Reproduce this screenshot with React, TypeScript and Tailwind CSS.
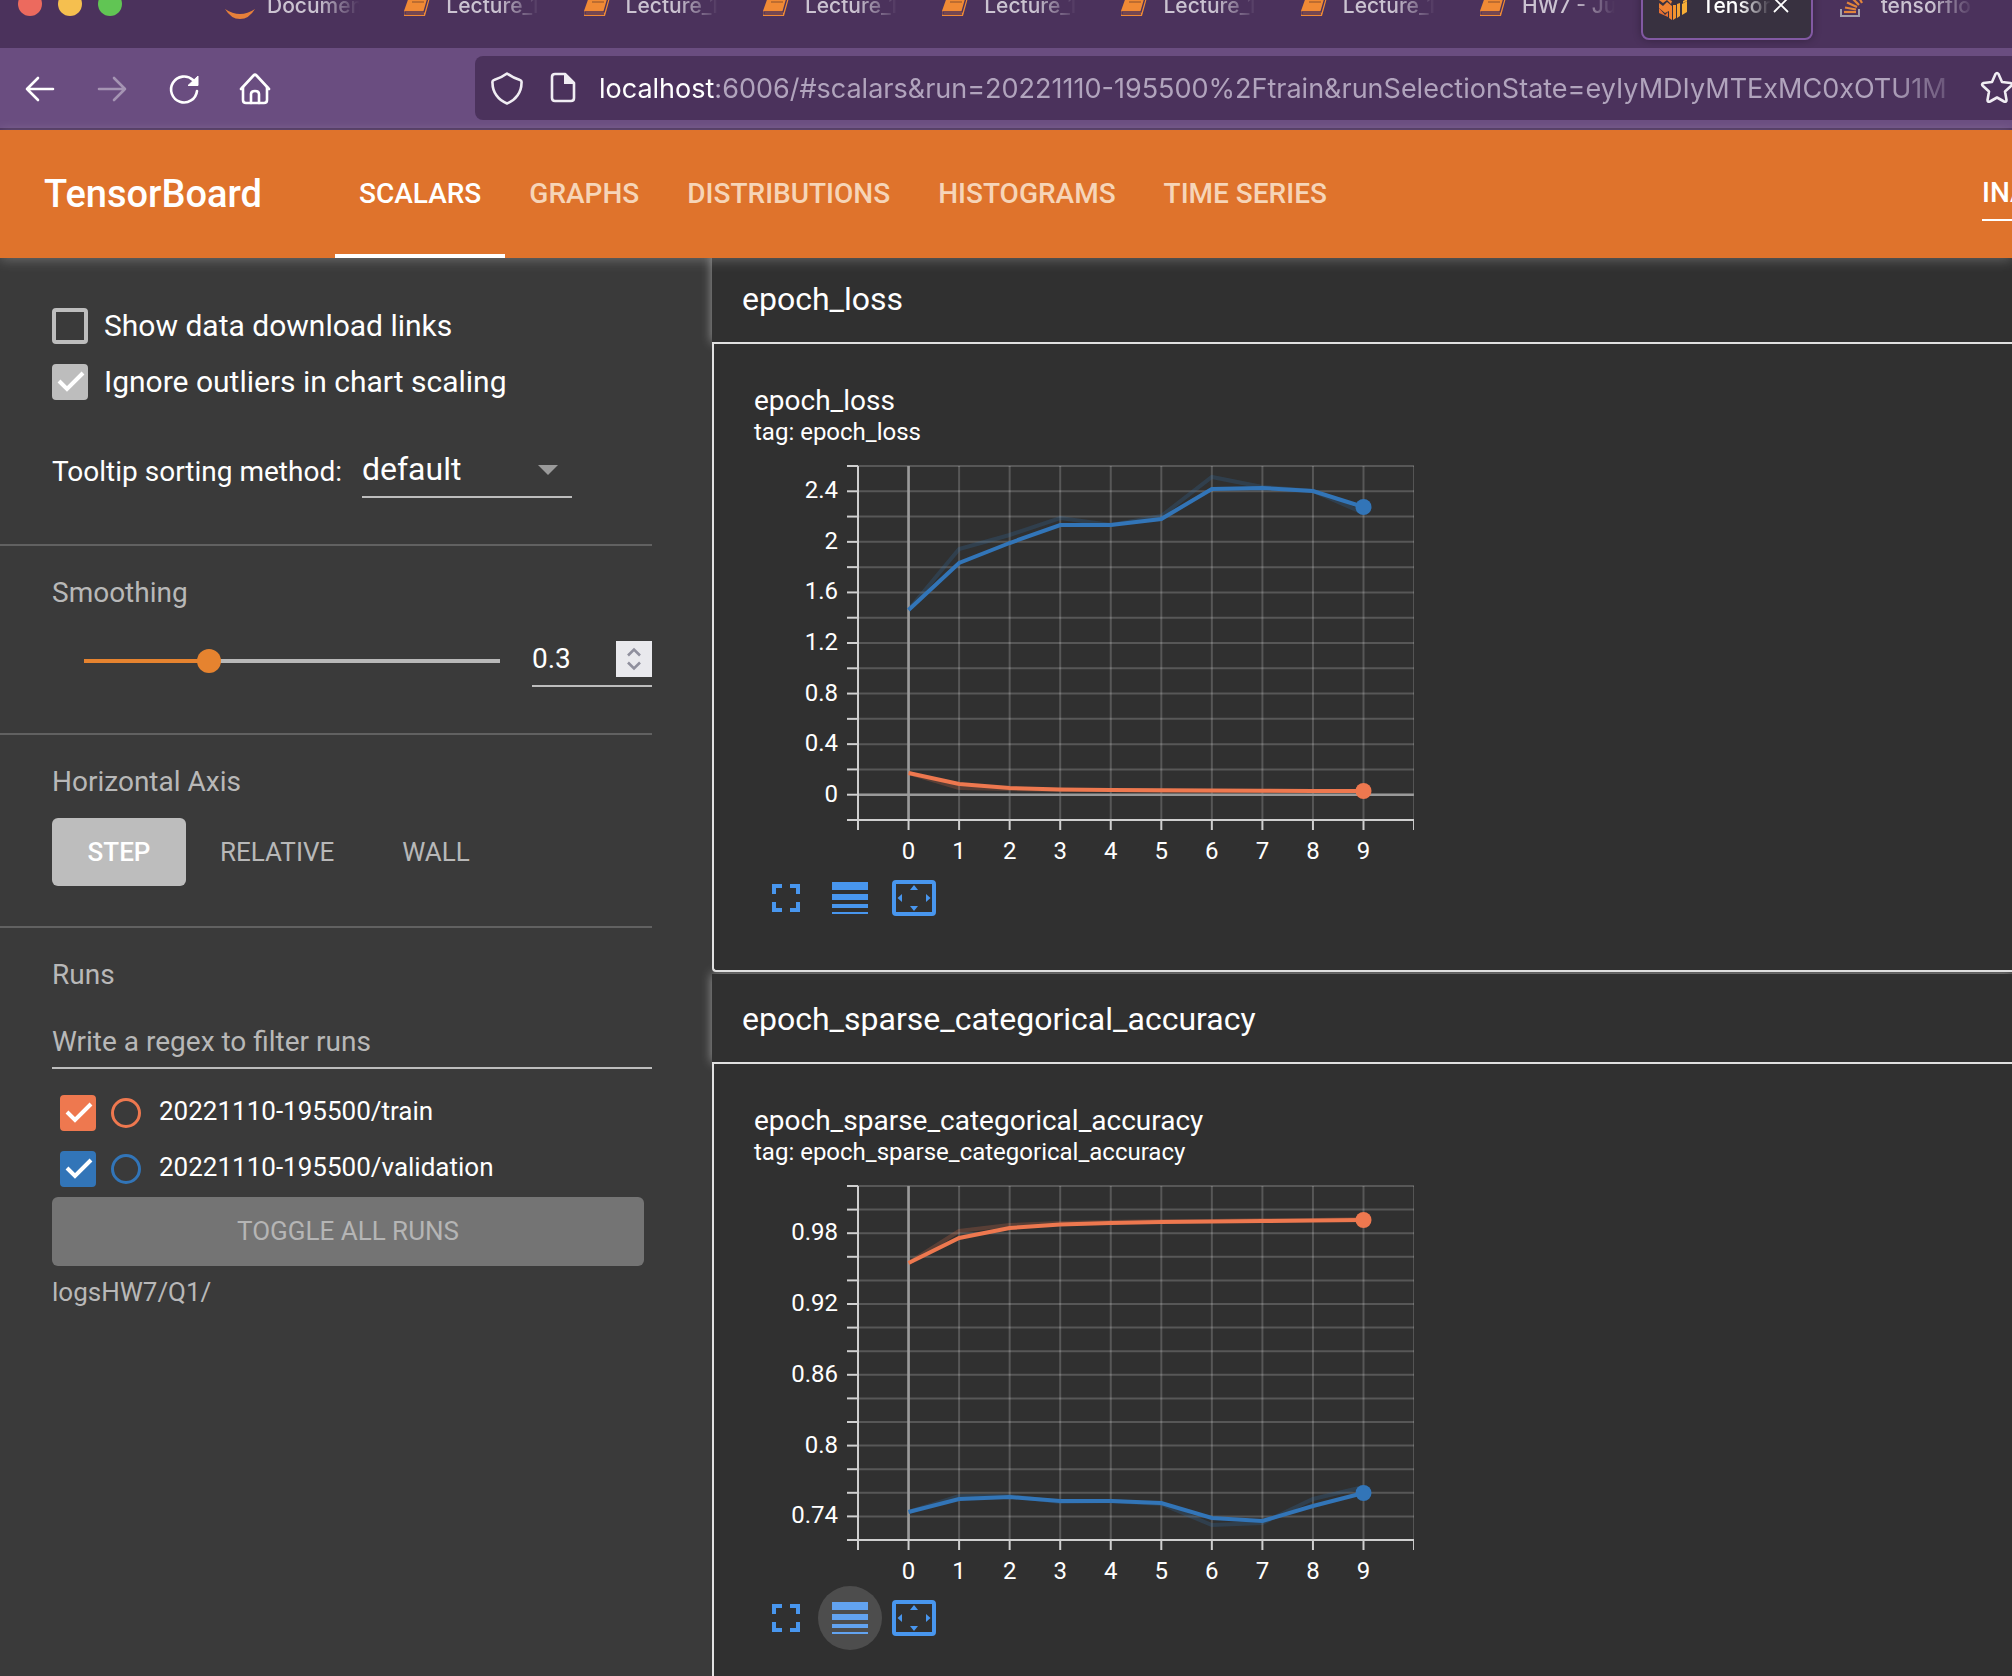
import React, { useState } from "react";

const ORANGE = "#ee784f";
const BLUE = "#3275b8";

/* ---------- browser chrome ---------- */

function JupyterIcon() {
  return (
    <svg viewBox="0 0 32 32" className="size-8 shrink-0" aria-hidden="true">
      <path d="M0 19 Q15 29 30 19 Q24 29 15 29 Q6 29 0 19Z" fill="#e6803a" />
    </svg>
  );
}

function BookIcon() {
  return (
    <svg viewBox="0 0 32 32" className="size-8 shrink-0" aria-hidden="true">
      <path d="M6 4 H27 L21 26 H0 V21Z" fill="#f08a35" />
      <path d="M24 8 L20 22 H1 V24 H20" fill="none" stroke="#4b325c" strokeWidth="1.4" />
      <path d="M8 12 H20" stroke="#a8602f" strokeWidth="1.4" />
    </svg>
  );
}

function TensorBoardIcon() {
  return (
    <svg viewBox="0 0 32 32" className="size-8 shrink-0" aria-hidden="true">
      <path d="M0 13 L4 16 L8 12 L13 16 L13 30 L10 28 V21 L6 23 L0 18Z" fill="#ef8232" />
      <path d="M0 18 L6 25 L9 22 V27 L0 23Z" fill="#e86f32" />
      <path d="M0 5 L13 11 L12 14 L8 10 L4 13 L0 10Z" fill="#ef8232" />
      <path d="M14 15 H17 V28 L14 30Z" fill="#f3932f" />
      <path d="M18 14 L21 13 V26 L18 28Z" fill="#f3a233" />
      <path d="M23 14 L28 11 V22 L23 25Z" fill="#f6ad36" />
      <path d="M24 11 L28 9 V11 L24 13Z" fill="#f6ad36" />
    </svg>
  );
}

function StackOverflowIcon() {
  return (
    <svg viewBox="0 0 32 32" className="size-8 shrink-0" aria-hidden="true">
      <path d="M2 19 V26 H20 V19" fill="none" stroke="#a3a1ac" strokeWidth="2" />
      <g stroke="#e2853c" strokeWidth="2.2">
        <path d="M5 22 H17" />
        <path d="M6 17.5 L17 19.5" />
        <path d="M8 12.5 L18 17" />
        <path d="M12 7 L20 15" />
        <path d="M18 4 L23 13" />
      </g>
    </svg>
  );
}

type BrowserTab = { label: string; icon: () => React.JSX.Element; active?: boolean };

const browserTabs: BrowserTab[] = [
  { label: "Documen", icon: JupyterIcon },
  { label: "Lecture_1", icon: BookIcon },
  { label: "Lecture_1", icon: BookIcon },
  { label: "Lecture_1", icon: BookIcon },
  { label: "Lecture_1", icon: BookIcon },
  { label: "Lecture_1", icon: BookIcon },
  { label: "Lecture_1", icon: BookIcon },
  { label: "HW7 - Ju", icon: BookIcon },
  { label: "Tensor", icon: TensorBoardIcon, active: true },
  { label: "tensorflo", icon: StackOverflowIcon },
];

function TabStrip() {
  return (
    <div className="flex h-12 shrink-0 items-end overflow-hidden bg-[#4b325c] pr-5 pb-2 font-['Inter',sans-serif]">
      <div className="flex h-[72px] w-[207px] shrink-0 items-center gap-4 pl-[18px]">
        <button aria-label="Close window" className="size-6 rounded-full bg-[#ec6a5e]" />
        <button aria-label="Minimize window" className="size-6 rounded-full bg-[#f5bf4f]" />
        <button aria-label="Zoom window" className="size-6 rounded-full bg-[#61c554]" />
      </div>
      <div className="flex min-w-0 flex-1 gap-2">
        {browserTabs.map((tab, i) => (
          <div
            key={i}
            className={
              tab.active
                ? "flex h-[68px] min-w-0 flex-1 items-center rounded-lg border-2 border-[#8259a3] bg-[#383140] px-4 text-white shadow-[0_0_8px_rgba(0,0,0,0.3)]"
                : "flex h-[68px] min-w-0 flex-1 items-center rounded-lg border-2 border-transparent px-4 text-[#cbc3d1]"
            }
          >
            <button className="flex min-w-0 flex-1 items-center gap-2.5 text-left">
              <tab.icon />
              <span className="min-w-0 flex-1 overflow-hidden text-[21px] leading-7 font-medium whitespace-nowrap [mask-image:linear-gradient(to_right,black_55%,transparent_100%)]">
                {tab.label}
              </span>
            </button>
            {tab.active && (
              <button aria-label="Close tab" className="mr-1 shrink-0">
                <svg viewBox="0 0 20 20" className="size-5" aria-hidden="true">
                  <path d="M3 2 L17 16 M17 2 L3 16" stroke="#fff" strokeWidth="1.8" />
                </svg>
              </button>
            )}
          </div>
        ))}
      </div>
    </div>
  );
}

const stroke = {
  fill: "none",
  stroke: "currentColor",
  strokeWidth: 2.6,
  strokeLinecap: "round" as const,
  strokeLinejoin: "round" as const,
};

function Toolbar() {
  return (
    <div className="flex h-[82px] shrink-0 items-center border-b-2 border-[#4b325c] bg-[#6a4d80] font-['Inter',sans-serif] text-white">
      <div className="flex w-[475px] shrink-0 items-center gap-9 pl-[22px]">
        <button aria-label="Back">
          <svg viewBox="0 0 36 36" className="size-9" aria-hidden="true">
            <path {...stroke} d="M31 19 H5 M16 8 L5 19 L16 30" />
          </svg>
        </button>
        <button aria-label="Forward" className="text-[#a594b3]">
          <svg viewBox="0 0 36 36" className="size-9" aria-hidden="true">
            <path {...stroke} d="M5 19 H31 M20 8 L31 19 L20 30" />
          </svg>
        </button>
        <button aria-label="Reload">
          <svg viewBox="0 0 36 36" className="size-9" aria-hidden="true">
            <path {...stroke} d="M31 21 A13 13 0 1 1 27 10" />
            <path d="M32 6 V15.5 H22Z" fill="currentColor" stroke="currentColor" strokeLinejoin="round" />
          </svg>
        </button>
        <button aria-label="Home">
          <svg viewBox="0 0 36 36" className="size-9" aria-hidden="true">
            <path {...stroke} d="M3 19 L15.500 5.500 Q17 4 18.500 5.500 L31 19" />
            <path {...stroke} d="M5 17 V30 Q5 33 8 33 H26 Q29 33 29 30 V17" />
            <path {...stroke} d="M13 33 V24 Q13 21 17 21 Q21 21 21 24 V33" />
          </svg>
        </button>
      </div>
      <div className="flex h-16 min-w-0 flex-1 items-center rounded-l-lg bg-[#4b325c]">
        <button aria-label="Tracking protection" className="ml-3.5 shrink-0 text-[#f0edf3]">
          <svg viewBox="0 0 36 36" className="size-9" aria-hidden="true">
            <path {...stroke} d="M18 3.500 Q24 8 31 10 Q33 10.500 32.500 13 C32.500 22 27 30 18 33.500 C9 30 3.500 22 3.500 13 Q3 10.500 5 10 Q12 8 18 3.500Z" />
          </svg>
        </button>
        <button aria-label="Site information" className="ml-5 shrink-0 text-[#f0edf3]">
          <svg viewBox="0 0 36 36" className="size-9" aria-hidden="true">
            <path {...stroke} d="M10 4 H20 L29 13 V28 Q29 31 26 31 H10 Q7 31 7 28 V7 Q7 4 10 4Z" />
            <path d="M19 3 L30 14 H19Z" fill="currentColor" />
          </svg>
        </button>
        <div
          role="textbox"
          aria-label="Address"
          className="ml-[18px] min-w-0 flex-1 overflow-hidden pt-0.5 text-[27px] leading-9 whitespace-nowrap text-[#b1a4bd] [mask-image:linear-gradient(to_right,black_94%,transparent_100%)]"
        >
          <span className="text-white">localhost</span>
          :6006/#scalars&amp;run=20221110-195500%2Ftrain&amp;runSelectionState=eyIyMDIyMTExMC0xOTU1M
        </div>
        <button aria-label="Bookmark this page" className="ml-2 w-8 shrink-0 overflow-hidden text-[#f0edf3]">
          <svg viewBox="0 0 36 36" className="size-9" aria-hidden="true">
            <path
              {...stroke}
              d="M15.500 4 Q17 2 18.500 4 L22 12 L30.500 13 Q33 14 31 16 L25 21.500 L26.500 30 Q26.500 32.500 24 31.500 L17 27.500 L10 31.500 Q7.500 32.500 7.500 30 L9 21.500 L3 16 Q1 14 3.500 13 L12 12Z"
            />
          </svg>
        </button>
      </div>
    </div>
  );
}

/* ---------- TensorBoard header ---------- */

const plugins = ["SCALARS", "GRAPHS", "DISTRIBUTIONS", "HISTOGRAMS", "TIME SERIES"];

function Header() {
  return (
    <header className="relative z-10 flex h-32 shrink-0 bg-[#df732c] shadow-[0_2px_12px_rgba(255,255,255,0.25)]">
      <h1 className="flex w-[335px] shrink-0 items-center pl-11 text-[38px] font-medium text-white">TensorBoard</h1>
      <nav className="flex">
        {plugins.map((name, i) => (
          <a
            key={name}
            href={"#" + name.toLowerCase().replace(" ", "-")}
            className={
              i === 0
                ? "flex items-center border-y-4 border-t-transparent border-b-white px-6 text-[28px] font-medium whitespace-nowrap text-white"
                : "flex items-center px-6 text-[28px] font-medium whitespace-nowrap text-[#f6d5b8]"
            }
          >
            {name}
          </a>
        ))}
      </nav>
      <button className="mt-10 ml-auto flex h-[51px] w-[30px] items-center overflow-hidden border-b-2 border-white pb-1 text-[28px] font-medium whitespace-nowrap text-white">
        INACTIVE
      </button>
    </header>
  );
}

/* ---------- sidebar ---------- */

function Check({ className }: { className: string }) {
  return (
    <svg viewBox="0 0 36 36" className={className} aria-hidden="true">
      <path d="M7 17 L15 25 L31 9" fill="none" stroke="#fff" strokeWidth="4" />
    </svg>
  );
}

const checkStyle = "pointer-events-none invisible col-start-1 row-start-1 size-9 peer-checked:visible";

function Option({ label, initial }: { label: string; initial: boolean }) {
  const [on, setOn] = useState(initial);
  return (
    <label className="flex h-9 items-center gap-4 text-[30px] text-white">
      <span className="grid shrink-0">
        <input
          type="checkbox"
          checked={on}
          onChange={() => setOn(!on)}
          className="peer col-start-1 row-start-1 size-9 appearance-none rounded border-4 border-[#bdbdbd] checked:bg-[#bdbdbd]"
        />
        <Check className={checkStyle} />
      </span>
      <span className="pb-0.5">{label}</span>
    </label>
  );
}

function RunRow({ name, box, ring }: { name: string; box: string; ring: string }) {
  const [on, setOn] = useState(true);
  return (
    <div className="flex h-9 items-center pl-2">
      <label className="grid shrink-0">
        <input type="checkbox" aria-label={"Show " + name} checked={on} onChange={() => setOn(!on)} className={box} />
        <Check className={checkStyle} />
      </label>
      <input type="radio" name="isolate" aria-label={"Isolate " + name} className={ring} />
      <span className="ml-[18px] pb-1 text-[26px] text-white">{name}</span>
    </div>
  );
}

const headingStyle = "text-[28px] leading-8 text-[#b8b8b8]";
const sectionStyle = "border-t-2 border-[#616161] pt-[31px] pl-[52px]";

function Sidebar() {
  const [smoothing, setSmoothing] = useState(0.3);
  const [axis, setAxis] = useState("STEP");
  const pct = smoothing * 100;
  return (
    <aside className="w-[712px] shrink-0 bg-[#3a3a3a] pr-[60px]">
      <section className="pt-[50px] pb-[46px] pl-[52px]">
        <div className="flex flex-col gap-5">
          <Option label="Show data download links" initial={false} />
          <Option label="Ignore outliers in chart scaling" initial={true} />
        </div>
        <div className="mt-[42px] flex items-center gap-5">
          <label htmlFor="sorting" className="pt-1 text-[28px] text-white">
            Tooltip sorting method:
          </label>
          <div className="grid w-[210px] items-center">
            <select
              id="sorting"
              defaultValue="default"
              className="col-start-1 row-start-1 h-14 w-full appearance-none border-b-2 border-[#bdbdbd] bg-transparent text-[32px] text-white outline-none"
            >
              <option>default</option>
              <option>ascending</option>
              <option>descending</option>
              <option>nearest</option>
            </select>
            <svg
              viewBox="0 0 20 10"
              className="pointer-events-none col-start-1 row-start-1 mr-3.5 h-2.5 w-5 justify-self-end"
              aria-hidden="true"
            >
              <path d="M0 0 H20 L10 10Z" fill="#9a9a9a" />
            </svg>
          </div>
        </div>
      </section>

      <section className={sectionStyle + " pb-[46px]"}>
        <h2 className={headingStyle}>
          <label htmlFor="smoothing">Smoothing</label>
        </h2>
        <div className="mt-7 flex items-start pl-5">
          <input
            id="smoothing"
            type="range"
            min={0}
            max={1}
            step={0.1}
            value={smoothing}
            onChange={(e) => setSmoothing(Number(e.target.value))}
            style={{ backgroundImage: `linear-gradient(to right, #e6832f ${pct}%, #b8b8b8 ${pct}%)` }}
            className="h-12 min-w-0 flex-1 appearance-none bg-[length:calc(100%-24px)_4px] bg-center bg-no-repeat [&::-webkit-slider-thumb]:size-6 [&::-webkit-slider-thumb]:appearance-none [&::-webkit-slider-thumb]:rounded-full [&::-webkit-slider-thumb]:bg-[#e6832f]"
          />
          <div className="ml-5 flex h-[50px] w-[120px] items-center border-b-2 border-[#bdbdbd] pb-1">
            <input
              type="number"
              aria-label="Smoothing value"
              step={0.1}
              value={smoothing}
              onChange={(e) => setSmoothing(Number(e.target.value))}
              className="w-0 min-w-0 flex-1 [appearance:textfield] bg-transparent text-[28px] text-white outline-none [&::-webkit-inner-spin-button]:appearance-none"
            />
            <div className="flex size-9 flex-col bg-[#e9e9ed] py-1 text-[#8f8f9d]">
              <button
                aria-label="Increase smoothing"
                onClick={() => setSmoothing(Math.min(1, Math.round(smoothing * 10 + 1) / 10))}
                className="flex flex-1 items-center justify-center"
              >
                <svg viewBox="0 0 16 10" className="h-2.5 w-4" aria-hidden="true">
                  <path d="M2 8.500 L8 2.500 L14 8.500" fill="none" stroke="currentColor" strokeWidth="2.600" />
                </svg>
              </button>
              <button
                aria-label="Decrease smoothing"
                onClick={() => setSmoothing(Math.max(0, Math.round(smoothing * 10 - 1) / 10))}
                className="flex flex-1 items-center justify-center"
              >
                <svg viewBox="0 0 16 10" className="h-2.5 w-4" aria-hidden="true">
                  <path d="M2 1.500 L8 7.500 L14 1.500" fill="none" stroke="currentColor" strokeWidth="2.600" />
                </svg>
              </button>
            </div>
          </div>
        </div>
      </section>

      <section className={sectionStyle + " pb-10"}>
        <h2 className={headingStyle}>Horizontal Axis</h2>
        <div className="mt-5 flex">
          {["STEP", "RELATIVE", "WALL"].map((name) => (
            <button
              key={name}
              aria-pressed={axis === name}
              onClick={() => setAxis(name)}
              className={
                axis === name
                  ? "h-[68px] min-w-[134px] rounded-md bg-[#bdbdbd] px-[34px] text-[26px] font-medium text-white"
                  : "h-[68px] min-w-[134px] rounded-md px-[34px] text-[26px] text-[#b8b8b8]"
              }
            >
              {name}
            </button>
          ))}
        </div>
      </section>

      <section className={sectionStyle}>
        <h2 className={headingStyle}>Runs</h2>
        <input
          type="text"
          aria-label="Filter runs"
          placeholder="Write a regex to filter runs"
          className="mt-[22px] block h-14 w-full border-b-2 border-[#bdbdbd] bg-transparent pt-0.5 text-[28px] text-white outline-none placeholder:text-[#b8b8b8] placeholder:opacity-100"
        />
        <div className="mt-[26px] flex flex-col gap-5">
          <RunRow
            name="20221110-195500/train"
            box="peer col-start-1 row-start-1 size-9 appearance-none rounded border-4 border-[#ee784f] checked:bg-[#ee784f]"
            ring="ml-[15px] size-[30px] shrink-0 appearance-none rounded-full border-3 border-[#ee784f] checked:bg-[#ee784f]"
          />
          <RunRow
            name="20221110-195500/validation"
            box="peer col-start-1 row-start-1 size-9 appearance-none rounded border-4 border-[#3275b8] checked:bg-[#3275b8]"
            ring="ml-[15px] size-[30px] shrink-0 appearance-none rounded-full border-3 border-[#3275b8] checked:bg-[#3275b8]"
          />
        </div>
        <div className="mt-2.5 pr-2">
          <button className="h-[69px] w-full rounded-md bg-[#747474] text-[26px] text-[#b5b5b5]">TOGGLE ALL RUNS</button>
        </div>
        <p className="mt-2.5 text-[26px] leading-8 text-[#b8b8b8]">logsHW7/Q1/</p>
      </section>
    </aside>
  );
}

/* ---------- charts ---------- */

type Series = { color: string; raw: number[]; smooth: number[] };
type ChartData = {
  tag: string;
  rows: number;
  labels: { row: number; text: string }[];
  zeroRow?: number;
  series: Series[];
  hovered?: boolean;
};

const LEFT = 104;
const TOP = 10;
const BOTTOM = 364;
const STEP_X = 50.55;
const xAt = (i: number) => LEFT + STEP_X * (i + 1);
const points = (ys: number[]) => ys.map((y, i) => `${xAt(i)},${y}`).join(" ");

function Chart({ data }: { data: ChartData }) {
  const dy = (BOTTOM - TOP) / data.rows;
  const rows = Array.from({ length: data.rows + 1 }, (_, r) => BOTTOM - r * dy);
  const cols = Array.from({ length: 12 }, (_, c) => LEFT + STEP_X * c);
  return (
    <svg
      viewBox="0 0 660 410"
      role="img"
      aria-label={data.tag + " chart"}
      className="mt-[9px] block h-[410px] w-[660px] font-['Roboto',sans-serif] text-2xl"
    >
      <g stroke="#fff" strokeOpacity="0.19" strokeWidth="2">
        {rows.map((y) => (
          <path key={y} d={`M${LEFT} ${y} H660`} />
        ))}
        {cols.map((x) => (
          <path key={x} d={`M${x} ${TOP} V${BOTTOM}`} />
        ))}
      </g>
      <g stroke="#9a9a9a" strokeWidth="2.600">
        <path d={`M${xAt(0)} ${TOP} V${BOTTOM}`} />
        {data.zeroRow !== undefined && <path d={`M${LEFT} ${rows[data.zeroRow]} H660`} />}
      </g>
      <g stroke="#cfcfcf" strokeWidth="2">
        <path d={`M${LEFT} ${TOP} V${BOTTOM + 10}`} />
        <path d={`M${LEFT} ${BOTTOM} H660`} />
        {rows.map((y) => (
          <path key={y} d={`M93 ${y} H${LEFT}`} />
        ))}
        {cols.map((x) => (
          <path key={x} d={`M${x} ${BOTTOM} V${BOTTOM + 10}`} />
        ))}
      </g>
      <g fill="#fff" textAnchor="end">
        {data.labels.map((l) => (
          <text key={l.text} x="84" y={rows[l.row] + 7}>
            {l.text}
          </text>
        ))}
      </g>
      <g fill="#fff" textAnchor="middle">
        {Array.from({ length: 10 }, (_, i) => (
          <text key={i} x={xAt(i)} y="403">
            {i}
          </text>
        ))}
      </g>
      {data.series.map((s) => (
        <g key={s.color} fill="none" stroke={s.color} strokeWidth="4">
          <polyline points={points(s.raw)} strokeOpacity="0.22" />
          <polyline points={points(s.smooth)} />
          <circle cx={xAt(9)} cy={s.smooth[9]} r="8" fill={s.color} stroke="none" />
        </g>
      ))}
    </svg>
  );
}

const charts: ChartData[] = [
  {
    tag: "epoch_loss",
    rows: 14,
    zeroRow: 1,
    labels: [
      { row: 1, text: "0" },
      { row: 3, text: "0.4" },
      { row: 5, text: "0.8" },
      { row: 7, text: "1.2" },
      { row: 9, text: "1.6" },
      { row: 11, text: "2" },
      { row: 13, text: "2.4" },
    ],
    series: [
      {
        color: ORANGE,
        raw: [317, 332, 333, 334, 334, 335, 335, 335, 335, 335],
        smooth: [317, 328, 332, 333.4, 334, 334.3, 334.6, 334.8, 335, 335],
      },
      {
        color: BLUE,
        raw: [154, 93, 79, 62, 69, 60, 21, 31, 35, 57],
        smooth: [154, 107, 87, 69, 69, 63, 33, 32, 35, 51],
      },
    ],
  },
  {
    tag: "epoch_sparse_categorical_accuracy",
    rows: 15,
    labels: [
      { row: 1, text: "0.74" },
      { row: 4, text: "0.8" },
      { row: 7, text: "0.86" },
      { row: 10, text: "0.92" },
      { row: 13, text: "0.98" },
    ],
    hovered: true,
    series: [
      {
        color: ORANGE,
        raw: [87, 55, 49, 47, 46, 45, 45, 44, 44, 43],
        smooth: [87, 62, 52, 48.4, 47, 46, 45.6, 45, 44.5, 44],
      },
      {
        color: BLUE,
        raw: [336, 320, 320, 326, 325, 328, 349, 347, 323, 311],
        smooth: [336, 323, 321, 325, 325, 327, 342, 345, 330, 317],
      },
    ],
  },
];

function ChartButtons({ hovered }: { hovered?: boolean }) {
  return (
    <div className="flex text-[#4896ee]">
      <button aria-label="Toggle fullscreen" className="flex size-16 items-center justify-center">
        <svg viewBox="0 0 28 28" className="size-7" aria-hidden="true">
          <path
            d="M2 10 V2 H10 M18 2 H26 V10 M26 18 V26 H18 M10 26 H2 V18"
            fill="none"
            stroke="currentColor"
            strokeWidth="4"
          />
        </svg>
      </button>
      <button
        aria-label="Toggle y-axis log scale"
        className={
          hovered
            ? "flex size-16 items-center justify-center rounded-full bg-[#4d4d4d] text-[#62a3f0]"
            : "flex size-16 items-center justify-center rounded-full"
        }
      >
        <svg viewBox="0 0 36 32" className="h-8 w-9" fill="currentColor" aria-hidden="true">
          <path d="M0 0 H36 V8 H0Z M0 12 H36 V18 H0Z M0 22 H36 V26 H0Z M0 30 H36 V32 H0Z" />
        </svg>
      </button>
      <button aria-label="Fit domain to data" className="flex size-16 items-center justify-center">
        <svg viewBox="0 0 44 36" className="h-9 w-11" fill="currentColor" aria-hidden="true">
          <rect x="2" y="2" width="40" height="32" rx="2" fill="none" stroke="currentColor" strokeWidth="4" />
          <path d="M22 5 L26 10 H18Z M22 31 L26 26 H18Z M5.500 18 L10 14 V22Z M38.500 18 L34 14 V22Z" />
        </svg>
      </button>
    </div>
  );
}

function ChartCard({ data }: { data: ChartData }) {
  return (
    <section className="mb-0.5">
      <h2 className="flex h-[88px] items-center bg-[#303030] pt-0.5 pl-[30px] text-[32px] text-white shadow-[0_0_10px_rgba(255,255,255,0.5)]">
        {data.tag}
      </h2>
      <div className="relative rounded-bl border-y-2 border-l-2 border-[#e0e0e0] bg-[#303030] pt-[41px] pb-10 pl-10 text-white">
        <h3 className="text-[28px] leading-8">{data.tag}</h3>
        <p className="text-2xl leading-[30px]">tag: {data.tag}</p>
        <Chart data={data} />
        <ChartButtons hovered={data.hovered} />
      </div>
    </section>
  );
}

export default function App() {
  return (
    <div className="flex h-screen flex-col overflow-hidden bg-[#3a3a3a] font-['Roboto',sans-serif]">
      <TabStrip />
      <Toolbar />
      <Header />
      <div className="flex min-h-0 flex-1 overflow-y-auto [scrollbar-width:none]">
        <Sidebar />
        <main className="-mt-1 min-w-0 flex-1">
          {charts.map((c) => (
            <ChartCard key={c.tag} data={c} />
          ))}
        </main>
      </div>
    </div>
  );
}
